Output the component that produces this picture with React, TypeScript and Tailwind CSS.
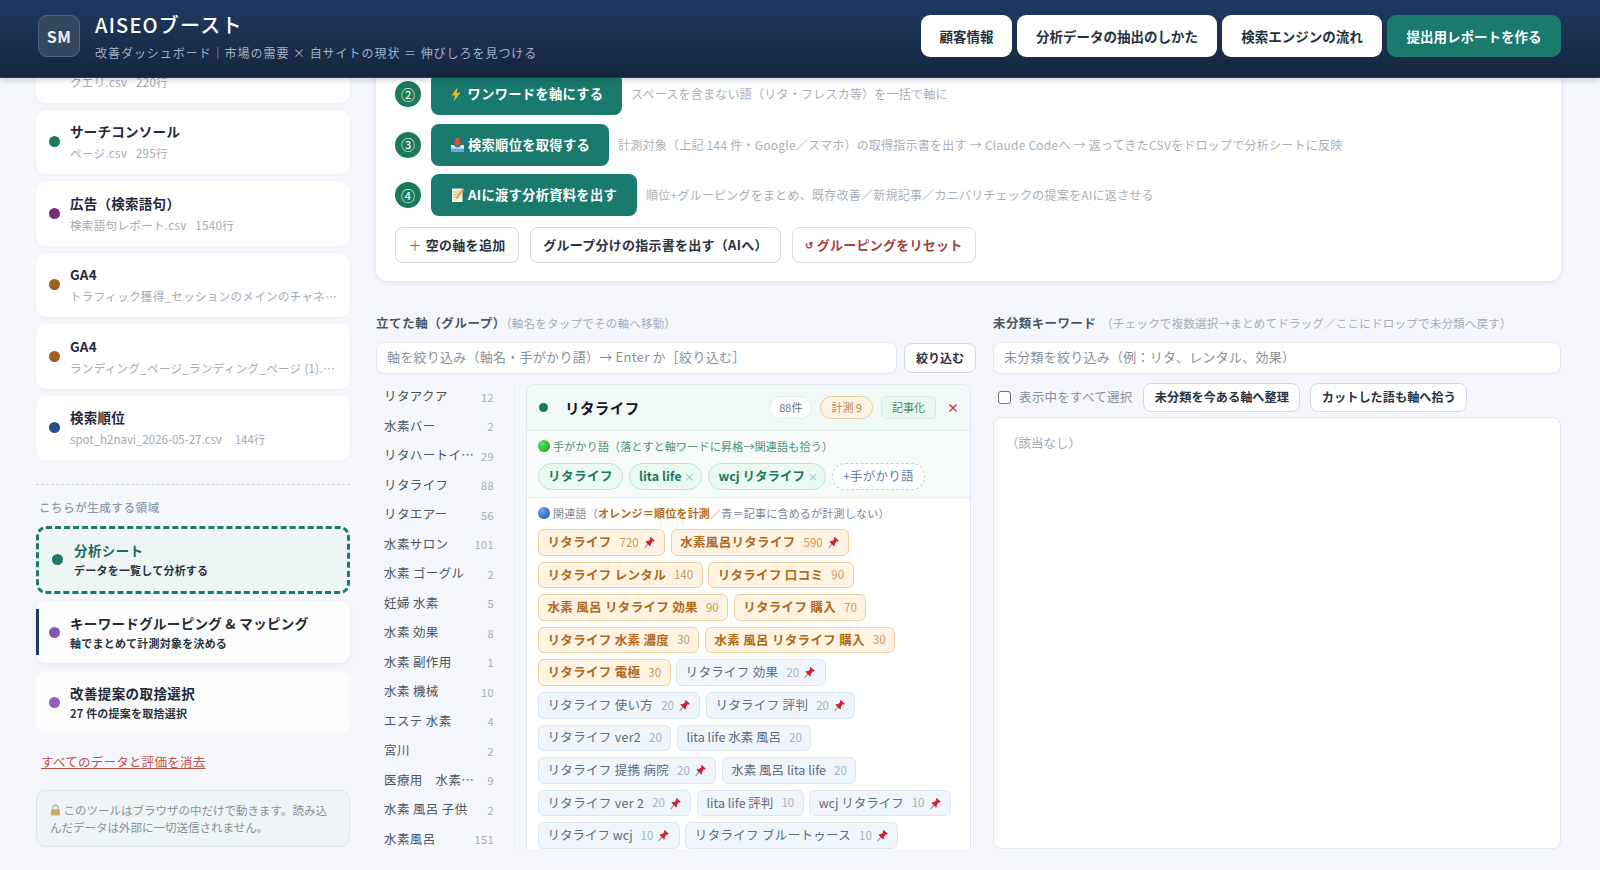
import React from "react";

const FONT = "font-['Noto_Sans_CJK_JP','Noto_Sans',sans-serif]";

function Bolt() {
  return (
    <svg width="12" height="15" viewBox="0 0 12 15" className="shrink-0 mr-[3px]">
      <path d="M7.5 0.5 L1.5 8.5 H5.2 L3.6 14.5 L10.5 5.8 H6.6 Z" fill="#f5b921" />
    </svg>
  );
}
function Tray() {
  return (
    <svg width="15" height="16" viewBox="0 0 15 16" className="shrink-0">
      <path d="M5.6 1h3.8v4.2h2.2L7.5 9.4 3.4 5.2h2.2z" fill="#e0503c" />
      <path d="M1 8h3.2l1.4 2.2h3.8L10.8 8H14v7H1z" fill="#dfe9f5" />
      <path d="M1 11.5h13V15H1z" fill="#6da6dc" />
    </svg>
  );
}
function Memo() {
  return (
    <svg width="14" height="16" viewBox="0 0 14 16" className="shrink-0">
      <path d="M1 1.5h10.5V15H1z" fill="#f6efd2" />
      <path d="M2.5 5h7M2.5 7.5h7M2.5 10h5" stroke="#b7b09a" strokeWidth="0.8" />
      <path d="M11.8 1.2 13.4 2.6 6.6 11.4 4.6 12.4 5 10.2z" fill="#e8a33c" />
    </svg>
  );
}
function Lock() {
  return (
    <svg width="11" height="12" viewBox="0 0 11 12" className="shrink-0 inline-block align-[-1px]">
      <path d="M3 5.5V3.6a2.5 2.5 0 0 1 5 0v1.9" fill="none" stroke="#a9adb3" strokeWidth="1.2" />
      <rect x="1" y="5.2" width="9" height="6.3" rx="1" fill="#c9ae62" />
    </svg>
  );
}
function Pin() {
  return (
    <svg width="13" height="13" viewBox="0 0 11 12" className="shrink-0 ml-[4px]">
      <path d="M1 11.2 4.4 6.8" stroke="#8d97a3" strokeWidth="1" />
      <path d="M6.4 0.6 10.4 4.4 9.3 5.2 8.4 4.9 6.6 7.6 6.9 9 6 9.8 1.8 5.4 2.7 4.6 4.1 4.9 6.2 3 6 2z" fill="#d4202e" />
    </svg>
  );
}
function Ball({ c }: { c: string }) {
  return <span className={`inline-block w-3 h-3 rounded-full shrink-0 ${c}`} />;
}

function DataCard({ dot, title, sub, latin }: { dot: string; title: string; sub: string; latin?: boolean }) {
  return (
    <div className="h-[64.5px] shrink-0 rounded-[10px] bg-white flex items-center pl-[13px] pr-3 gap-[10px] shadow-[0_1px_3px_rgba(30,50,80,0.03)]">
      <span className={`w-[11px] h-[11px] rounded-full shrink-0 ${dot}`} />
      <div className="min-w-0 -mt-px">
        <div className="text-[13.5px] leading-[20px] font-semibold text-[#1f2937] tracking-[0.02em]">{title}</div>
        <div className={`text-[11.5px] leading-[16px] mt-[4px] text-[#a3a9b3] truncate whitespace-pre ${latin ? "tracking-normal" : "tracking-[0.03em]"}`}>{sub}</div>
      </div>
    </div>
  );
}

function Sidebar() {
  return (
    <aside className="w-[314px] shrink-0 ml-[36px] -mt-[40px] flex flex-col gap-[7.5px]">
      <div className="flex flex-col gap-[7px] shrink-0">
        <DataCard dot="bg-[#1a7a5e]" title="サーチコンソール" sub="クエリ.csv   220行" />
        <DataCard dot="bg-[#1a7a5e]" title="サーチコンソール" sub="ページ.csv   295行" />
        <DataCard dot="bg-[#7b2d73]" title="広告（検索語句）" sub="検索語句レポート.csv   1540行" />
        <DataCard dot="bg-[#a05f1f]" title="GA4" sub="トラフィック獲得_セッションのメインのチャネル.csv" />
        <DataCard dot="bg-[#a05f1f]" title="GA4" sub="ランディング_ページ_ランディング_ページ (1).csv   98行" />
        <DataCard dot="bg-[#2b5086]" title="検索順位" sub="spot_h2navi_2026-05-27.csv     144行" latin />
      </div>
      <div className="border-t border-dashed border-[#cfd4dc] mt-[16px]" />
      <div className="text-[11.5px] leading-[16px] mt-[7px] mb-[3px] pl-[3px] text-[#9199a5] font-medium tracking-[0.05em]">こちらが生成する領域</div>
      <div className="h-[68px] rounded-[10px] border-[3px] border-dashed border-[#1a7a6e] bg-[#edf6f5] flex items-center pl-[13px] gap-[11px] shrink-0">
        <span className="w-[11px] h-[11px] rounded-full bg-[#1a7a6e]" />
        <div className="-mt-[2px]">
          <div className="text-[13.5px] leading-[20px] font-semibold text-[#1a6b5f] tracking-[0.03em]">分析シート</div>
          <div className="text-[11px] leading-[16px] mt-[2px] font-semibold text-[#2b3340] tracking-[0.02em]">データを一覧して分析する</div>
        </div>
      </div>
      <div className="relative h-[62px] rounded-[10px] bg-[#fbfcfb] flex items-center pl-[13px] gap-[10px] shrink-0 shadow-[0_2px_5px_rgba(30,50,80,0.07)]">
        <span className="absolute left-0 top-[8px] h-[46px] w-[3px] bg-[#1e3a5f]" />
        <span className="w-[11px] h-[11px] rounded-full bg-[#8458b0]" />
        <div>
          <div className="text-[13.5px] leading-[20px] font-semibold text-[#1f2937] tracking-[0.025em]">キーワードグルーピング &amp; マッピング</div>
          <div className="text-[11px] leading-[16px] mt-[2px] font-semibold text-[#2b3340] tracking-[0.02em]">軸でまとめて計測対象を決める</div>
        </div>
      </div>
      <div className="h-[61px] mt-px rounded-[10px] bg-[#fbfcfb] flex items-center pl-[13px] gap-[10px] shrink-0">
        <span className="w-[11px] h-[11px] rounded-full bg-[#925cc4]" />
        <div>
          <div className="text-[13.5px] leading-[20px] font-semibold text-[#1f2937] tracking-[0.03em]">改善提案の取捨選択</div>
          <div className="text-[11px] leading-[16px] mt-[2px] font-semibold text-[#2b3340] tracking-[0.02em]">27 件の提案を取捨選択</div>
        </div>
      </div>
      <a className="text-[12.5px] leading-[18px] mt-[13px] ml-[5px] underline text-[#c0504d] tracking-[0.02em]">すべてのデータと評価を消去</a>
      <div className="mt-[11px] h-[57px] rounded-[10px] border border-[#d8e6e6] bg-[#eff4f6] px-[13px] py-[11px] text-[11.5px] leading-[17.5px] text-[#8a9099]">
        <Lock /> このツールはブラウザの中だけで動きます。読み込んだデータは外部に一切送信されません。
      </div>
    </aside>
  );
}

function Step({ n, icon, label, desc, w }: { n: string; icon: React.ReactNode; label: string; desc: string; w: string }) {
  return (
    <div className="flex items-center h-[42px]">
      <span className="w-[26px] h-[26px] rounded-full bg-[#1a7a5e] text-white text-[14px] flex items-center justify-center shrink-0">{n}</span>
      <span className={`ml-[10px] h-[42px] rounded-[8px] bg-[#1a7a6e] text-white text-[13.3px] font-semibold flex items-center justify-center gap-[3px] shrink-0 tracking-[0.02em] ${w}`}>
        {icon}
        {label}
      </span>
      <span className="ml-[9px] text-[12px] text-[#a9afb8] tracking-[0.02em] whitespace-nowrap">{desc}</span>
    </div>
  );
}

function OB({ children, cls = "" }: { children: React.ReactNode; cls?: string }) {
  return (
    <span className={`h-[36px] rounded-[8px] border-[1.5px] border-[#d3d9e3] bg-white flex items-center justify-center text-[13px] font-semibold text-[#2b3340] tracking-[0.02em] shrink-0 ${cls}`}>
      {children}
    </span>
  );
}

function TopPanel() {
  return (
    <section className="h-[243px] -mt-[40px] w-full shrink-0 rounded-b-[12px] bg-white shadow-[0_1px_5px_rgba(30,50,80,0.12)] pl-[19px] pr-5 pt-[35px] flex flex-col gap-[8.5px]">
      <Step n="②" icon={<Bolt />} label="ワンワードを軸にする" w="w-[191px]" desc="スペースを含まない語（リタ・フレスカ等）を一括で軸に" />
      <Step n="③" icon={<Tray />} label="検索順位を取得する" w="w-[178px]" desc="計測対象（上記 144 件・Google／スマホ）の取得指示書を出す → Claude Codeへ → 返ってきたCSVをドロップで分析シートに反映" />
      <Step n="④" icon={<Memo />} label="AIに渡す分析資料を出す" w="w-[206px]" desc="順位+グルーピングをまとめ、既存改善／新規記事／カニバリチェックの提案をAIに返させる" />
      <div className="flex gap-[11px] mt-[2px]">
        <OB cls="w-[124px]"><span className="text-[#6b7280] mr-[4px] font-normal">＋</span>空の軸を追加</OB>
        <OB cls="w-[251px]">グループ分けの指示書を出す（AIへ）</OB>
        <OB cls="w-[184px] !border-[#ead7d7] !text-[#a33f46]"><span className="text-[10px] mr-[3px]">↺</span>グルーピングをリセット</OB>
      </div>
    </section>
  );
}

const axes: [string, number][] = [
  ["リタアクア", 12], ["水素バー", 2], ["リタハートイン", 29], ["リタライフ", 88], ["リタエアー", 56], ["水素サロン", 101],
  ["水素 ゴーグル", 2], ["妊婦 水素", 5], ["水素 効果", 8], ["水素 副作用", 1], ["水素 機械", 10], ["エステ 水素", 4],
  ["宮川", 2], ["医療用　水素吸入器", 9], ["水素 風呂 子供", 2], ["水素風呂", 151],
];

function AxisList() {
  return (
    <div className="w-[139px] shrink-0 border-r border-[#eceff4] flex flex-col">
      <div className="-mt-[2px] flex flex-col">
        {axes.map(([t, n]) => (
          <div key={t} className="h-[29.5px] shrink-0 flex items-center pl-[8px] pr-[20px] justify-between text-[12.5px] text-[#4b5563] tracking-[0.03em]">
            <span className="truncate max-w-[90px]">{t}</span>
            <span className="text-[11px] text-[#a7aeb9]">{n}</span>
          </div>
        ))}
      </div>
    </div>
  );
}

function Chip({ t, n, pin, o }: { t: string; n: number; pin?: boolean; o?: boolean }) {
  const latin = /lita|wcj/.test(t);
  return (
    <span
      className={`h-[26.6px] rounded-[6px] border flex items-center px-[8.5px] text-[12.5px] whitespace-pre ${latin ? "tracking-normal" : "tracking-[0.025em]"} ${
        o ? "border-[#f1cf9b] bg-[#fdf3e3] text-[#b06a1b] font-semibold" : "border-[#dbe6f3] bg-[#f0f5fb] text-[#5d6b7d]"
      }`}
    >
      {t}
      <span className={`ml-[8px] text-[11.5px] tracking-normal ${o ? "text-[#c79a5c] font-normal" : "text-[#a9b2be]"}`}>{n}</span>
      {pin && <Pin />}
    </span>
  );
}

const chips: [string, number, boolean, boolean][] = [
  ["リタライフ", 720, true, true], ["水素風呂リタライフ", 590, true, true], ["リタライフ レンタル", 140, false, true], ["リタライフ 口コミ", 90, false, true],
  ["水素 風呂 リタライフ 効果", 90, false, true], ["リタライフ 購入", 70, false, true], ["リタライフ 水素 濃度", 30, false, true], ["水素 風呂 リタライフ 購入", 30, false, true],
  ["リタライフ 電極", 30, false, true], ["リタライフ 効果", 20, true, false], ["リタライフ 使い方", 20, true, false], ["リタライフ 評判", 20, true, false],
  ["リタライフ ver2", 20, false, false], ["lita life 水素 風呂", 20, false, false], ["リタライフ 提携 病院", 20, true, false], ["水素 風呂 lita life", 20, false, false],
  ["リタライフ ver 2", 20, true, false], ["lita life 評判", 10, false, false], ["wcj リタライフ", 10, true, false], ["リタライフ wcj", 10, true, false], ["リタライフ ブルートゥース", 10, true, false],
];

function Clue({ t, x }: { t: string; x?: boolean }) {
  return (
    <span className={`h-[27px] rounded-full border border-[#bfe3d3] bg-[#ecf8f2] pl-[9px] flex items-center text-[12.5px] font-semibold text-[#1a7a5e] whitespace-pre ${x ? "pr-[7px] tracking-normal" : "pr-[9px] tracking-[0.04em]"}`}>
      {t}
      {x && <span className="ml-[3px] text-[#8fb8a6] text-[10px] font-normal">×</span>}
    </span>
  );
}

function GroupCard() {
  return (
    <div className="flex-1 min-w-0 ml-[11px] mr-[5px] rounded-t-[8px] border border-b-0 border-[#dfe6ee] bg-white overflow-hidden">
      <div className="h-[46px] bg-[#f0f9f5] border-b border-[#dcebe4] flex items-center pl-[12px] pr-[11px]">
        <span className="w-[9px] h-[9px] rounded-full bg-[#1a7a5e]" />
        <span className="ml-[17px] text-[14.5px] font-semibold text-[#111827] tracking-[0.03em]">リタライフ</span>
        <span className="ml-auto h-[23px] px-[9px] rounded-full border border-[#e3ece8] bg-white flex items-center text-[11px] text-[#6b7280]">88件</span>
        <span className="ml-[8px] h-[23px] px-[10px] rounded-full border border-[#f0cd9b] bg-[#fdf3e3] flex items-center text-[11px] text-[#b98a4c]">計測 9</span>
        <span className="ml-[8px] h-[23px] px-[10px] rounded-[5px] border border-[#d8ebe2] bg-[#eaf6f0] flex items-center text-[11px] text-[#3f8f73]">記事化</span>
        <span className="ml-[11px] text-[12px] font-bold text-[#b23b3b]">×</span>
      </div>
      <div className="h-[67px] bg-[#f6fbf9] border-b border-[#e9eef0] pl-[11px] pt-[7px]">
        <div className="flex items-center gap-[3px] text-[11px] leading-[16px] text-[#4f8f78] tracking-[0.02em]">
          <Ball c="bg-[radial-gradient(circle_at_35%_30%,#5fe35f,#0f9a12)]" />
          <span>手がかり語（落とすと軸ワードに昇格→関連語も拾う）</span>
        </div>
        <div className="flex gap-[6px] mt-[9px]">
          <Clue t="リタライフ" />
          <Clue t="lita life" x />
          <Clue t="wcj リタライフ" x />
          <span className="h-[27px] rounded-full border border-dashed border-[#c5d0dc] bg-white px-[10px] flex items-center text-[12.5px] text-[#5f80a8] tracking-[0.02em]">+手がかり語</span>
        </div>
      </div>
      <div className="pl-[11px] pr-[10px] pt-[7px]">
        <div className="flex items-center gap-[3px] text-[11px] leading-[16px] text-[#7b8594] tracking-[0.02em]">
          <Ball c="bg-[radial-gradient(circle_at_35%_30%,#6aa9ee,#0d47b5)]" />
          <span>関連語（<b className="font-semibold text-[#b06a1b]">オレンジ＝順位を計測</b>／青＝記事に含めるが計測しない）</span>
        </div>
        <div className="flex flex-wrap gap-x-[5.5px] gap-y-[6px] mt-[8px]">
          {chips.map(([t, n, p, o]) => (
            <Chip key={t} t={t} n={n} pin={p} o={o} />
          ))}
        </div>
      </div>
    </div>
  );
}

function Inp({ children, cls = "" }: { children: React.ReactNode; cls?: string }) {
  return (
    <div className={`h-[32px] rounded-[8px] border border-[#e3e7ee] bg-white flex items-center px-[10px] pb-[2px] text-[13px] text-[#8a909a] tracking-[0.02em] ${cls}`}>
      {children}
    </div>
  );
}

export default function App() {
  return (
    <div className={`${FONT} w-[1600px] h-[870px] overflow-hidden bg-[#f4f6fb] flex flex-col`}>
      <header className="h-[78px] shrink-0 relative z-10 bg-gradient-to-b from-[#1f3b62] to-[#15253e] border-b border-[#2a3b52] shadow-[0_2px_6px_rgba(20,30,50,0.2)] flex items-start pt-[15px] pl-[38px] pr-[39px]">
        <div className="w-[42px] h-[42px] rounded-[9px] border border-[#52647f] bg-[#34475f] text-white/90 text-[16px] font-semibold flex items-center justify-center tracking-[0.03em]">SM</div>
        <div className="ml-[15px] -mt-[3px]">
          <div className="text-[20px] leading-[26px] font-medium text-white tracking-[0.06em]">AISEOブースト</div>
          <div className="text-[12px] leading-[18px] mt-[6px] text-[#a5b1c2] tracking-[0.08em] whitespace-pre">改善ダッシュボード｜市場の需要 × 自サイトの現状 ＝ 伸びしろを見つける</div>
        </div>
        <div className="ml-auto flex gap-[5px] text-[13.5px] font-semibold">
          <span className="w-[91px] h-[42px] rounded-[9px] bg-white text-[#27303d] flex items-center justify-center">顧客情報</span>
          <span className="w-[200px] h-[42px] rounded-[9px] bg-white text-[#27303d] flex items-center justify-center">分析データの抽出のしかた</span>
          <span className="w-[160px] h-[42px] rounded-[9px] bg-white text-[#27303d] flex items-center justify-center">検索エンジンの流れ</span>
          <span className="w-[174px] h-[42px] rounded-[9px] bg-[#1a7a6e] text-white flex items-center justify-center">提出用レポートを作る</span>
        </div>
      </header>
      <div className="flex-1 min-h-0 flex">
        <Sidebar />
        <main className="ml-[26px] w-[1185px] shrink-0 flex flex-col h-[771px]">
          <TopPanel />
          <div className="mt-[32px] flex-1 min-h-0 grid grid-cols-[600px_568px] gap-x-[17px] grid-rows-[29px_1fr]">
            <div className="text-[12.5px] leading-[20px] font-semibold text-[#4b5563] tracking-[0.045em] whitespace-nowrap">
              立てた軸（グループ）<span className="text-[11.5px] font-normal text-[#a7aeb9] tracking-[0.02em]">（軸名をタップでその軸へ移動）</span>
            </div>
            <div className="text-[12.5px] leading-[20px] font-semibold text-[#4b5563] tracking-[0.03em] whitespace-nowrap">
              未分類キーワード <span className="ml-[2px] text-[11.5px] font-normal text-[#a7aeb9] tracking-[0.02em]">（チェックで複数選択→まとめてドラッグ／ここにドロップで未分類へ戻す）</span>
            </div>
            <div className="flex flex-col min-h-0 overflow-hidden">
              <div className="flex gap-[7px] shrink-0">
                <Inp cls="flex-1">軸を絞り込み（軸名・手がかり語）→ Enter か［絞り込む］</Inp>
                <span className="w-[72px] h-[30px] mt-px rounded-[8px] border-[1.5px] border-[#d3d9e3] bg-white flex items-center justify-center text-[12px] font-semibold text-[#2b3340]">絞り込む</span>
              </div>
              <div className="flex mt-[10px] flex-1 min-h-0 overflow-hidden">
                <AxisList />
                <GroupCard />
              </div>
            </div>
            <div className="flex flex-col min-h-0">
              <Inp cls="shrink-0 text-[13px]">未分類を絞り込み（例：リタ、レンタル、効果）</Inp>
              <div className="flex items-center h-[30px] mt-[8px] shrink-0">
                <span className="ml-[5px] w-[13px] h-[13px] rounded-[3px] border border-[#6b7280] bg-white" />
                <span className="ml-[8px] text-[12.5px] text-[#8a909a] tracking-[0.02em]">表示中をすべて選択</span>
                <span className="ml-[11px] w-[157px] h-[29px] rounded-[8px] border-[1.5px] border-[#d3d9e3] bg-white flex items-center justify-center text-[12.2px] font-semibold text-[#2b3340]">未分類を今ある軸へ整理</span>
                <span className="ml-[10px] w-[157px] h-[29px] rounded-[8px] border-[1.5px] border-[#d3d9e3] bg-white flex items-center justify-center text-[12.2px] font-semibold text-[#2b3340]">カットした語も軸へ拾う</span>
              </div>
              <div className="mt-[5px] flex-1 min-h-0 rounded-[8px] border border-[#e3e7ee] bg-white px-[12px] py-[16px] text-[12.5px] leading-[18px] text-[#a3a9b3]">（該当なし）</div>
            </div>
          </div>
        </main>
      </div>
    </div>
  );
}
